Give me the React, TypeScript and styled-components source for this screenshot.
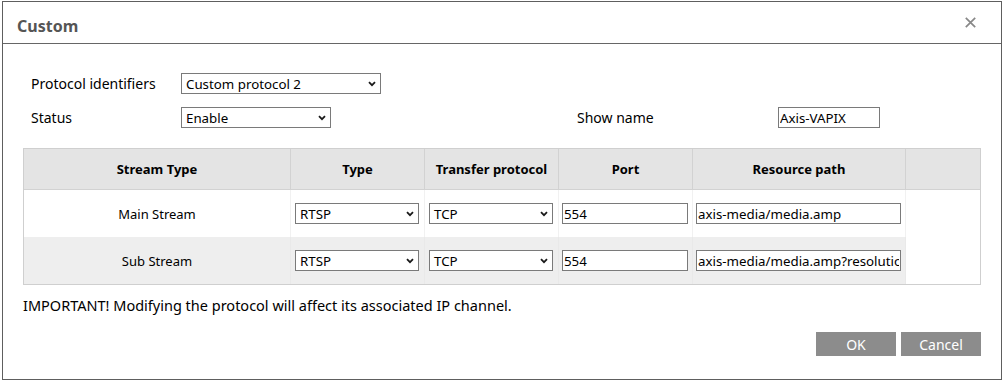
import React from "react";
import styled, { createGlobalStyle } from "styled-components";

const Global = createGlobalStyle`
  html, body { margin: 0; padding: 0; background: #fff; }
  body { font-family: "Noto Sans", "Open Sans", sans-serif; color: #000; }
  * { box-sizing: border-box; }
`;

const Page = styled.div`
  width: 1003px;
  height: 383px;
  padding: 1px 0 0 2px;
  background: #fff;
`;

const Dialog = styled.div`
  width: 1000px;
  height: 379px;
  border: 1px solid #5e5e5e;
  display: flex;
  flex-direction: column;
  background: #fff;
`;

const Header = styled.div`
  height: 42px;
  flex: none;
  border-bottom: 1px solid #666;
  display: flex;
  align-items: center;
  justify-content: space-between;
  padding: 0 25px 0 14px;
`;

const Title = styled.div`
  font-size: 16px;
  font-weight: 700;
  color: #555;
  padding-top: 6px;
`;

const Close = styled.button`
  border: none;
  background: none;
  padding: 0;
  width: 11px;
  height: 11px;
  display: flex;
  cursor: pointer;
`;

const Body = styled.div`
  padding: 29px 20px 0 20px;
  display: flex;
  flex-direction: column;
`;

const FormGrid = styled.div`
  margin-left: 8px;
  display: grid;
  grid-template-columns: 150px 396px 201px auto;
  grid-auto-rows: 21px;
  row-gap: 13px;
  align-items: center;
  font-size: 14px;
`;

const Label = styled.div`
  line-height: 21px;
  white-space: nowrap;
`;

const SelectBox = styled.div<{ $w: number }>`
  width: ${(p) => p.$w}px;
  height: 21px;
  border: 1px solid #7a7a7a;
  background: #fff;
  display: flex;
  align-items: center;
  justify-content: space-between;
  padding: 0 4px 0 4px;
  font-size: 13.3px;
  white-space: nowrap;
  justify-self: start;
`;

const TextInput = styled.input<{ $w: number }>`
  width: ${(p) => p.$w}px;
  height: 21px;
  border: 1px solid #7a7a7a;
  border-radius: 0;
  padding: 0 1px;
  margin: 0;
  font-family: "Noto Sans", "Open Sans", sans-serif;
  font-size: 13.3px;
  color: #000;
  background: #fff;
  outline: none;
  justify-self: start;
`;

const Table = styled.div`
  margin-top: 20px;
  width: 958px;
  border: 1px solid #cfcfcf;
`;

const COLS = "267px 134px 134px 134px 213px 1fr";

const HeadRow = styled.div`
  display: grid;
  grid-template-columns: ${COLS};
  height: 41px;
  background: #e4e4e4;
  border-bottom: 1px solid #d2d2d2;
`;

const HeadCell = styled.div`
  display: flex;
  align-items: center;
  justify-content: center;
  font-size: 13px;
  font-weight: 700;
  border-right: 1px solid #d2d2d2;
  &:last-child { border-right: none; }
`;

const Row = styled.div`
  display: grid;
  grid-template-columns: ${COLS};
  height: 47px;
`;

const Cell = styled.div<{ $alt?: boolean; $center?: boolean; $pad?: number }>`
  display: flex;
  align-items: center;
  justify-content: ${(p) => (p.$center ? "center" : "flex-start")};
  padding-left: ${(p) => p.$pad ?? 0}px;
  background: ${(p) => (p.$alt ? "#eeeeee" : "#ffffff")};
  border-right: 1px solid ${(p) => (p.$alt ? "#e9e9e9" : "#f1f1f1")};
  font-size: 13px;
`;

const Note = styled.div`
  margin-top: 10px;
  font-size: 14.5px;
  line-height: 20px;
`;

const Footer = styled.div`
  margin-top: 17px;
  display: flex;
  justify-content: flex-end;
  gap: 5px;
`;

const Btn = styled.button`
  width: 80px;
  height: 24px;
  border: none;
  background: #8c8c8c;
  color: #fff;
  font-family: "Noto Sans", "Open Sans", sans-serif;
  font-size: 14px;
  padding: 0;
  cursor: pointer;
`;

const Chevron = () => (
  <svg width="8" height="6" viewBox="0 0 8 6" style={{ flex: "none" }}>
    <path d="M1 1.2 L4 4.2 L7 1.2" fill="none" stroke="#1a1a1a" strokeWidth="1.8" />
  </svg>
);

const Select = ({ value, w }: { value: string; w: number }) => (
  <SelectBox $w={w}>
    <span>{value}</span>
    <Chevron />
  </SelectBox>
);

const rows = [
  { name: "Main Stream", path: "axis-media/media.amp" },
  { name: "Sub Stream", path: "axis-media/media.amp?resolution=640x480" },
];

export default function App() {
  return (
    <Page>
      <Global />
      <Dialog>
        <Header>
          <Title>Custom</Title>
          <Close aria-label="close">
            <svg width="11" height="11" viewBox="0 0 11 11">
              <path d="M0.8 0.8 L10.2 10.2 M10.2 0.8 L0.8 10.2" stroke="#888" strokeWidth="1.7" />
            </svg>
          </Close>
        </Header>
        <Body>
          <FormGrid>
            <Label>Protocol identifiers</Label>
            <Select value="Custom protocol 2" w={200} />
            <span />
            <span />
            <Label>Status</Label>
            <Select value="Enable" w={150} />
            <Label>Show name</Label>
            <TextInput $w={102} defaultValue="Axis-VAPIX" />
          </FormGrid>
          <Table>
            <HeadRow>
              <HeadCell>Stream Type</HeadCell>
              <HeadCell>Type</HeadCell>
              <HeadCell>Transfer protocol</HeadCell>
              <HeadCell>Port</HeadCell>
              <HeadCell>Resource path</HeadCell>
              <HeadCell />
            </HeadRow>
            {rows.map((r, i) => (
              <Row key={r.name}>
                <Cell $alt={i === 1} $center>{r.name}</Cell>
                <Cell $alt={i === 1} $pad={4}><Select value="RTSP" w={124} /></Cell>
                <Cell $alt={i === 1} $pad={4}><Select value="TCP" w={124} /></Cell>
                <Cell $alt={i === 1} $pad={3}><TextInput $w={126} defaultValue="554" /></Cell>
                <Cell $alt={i === 1} $pad={3}><TextInput $w={205} defaultValue={r.path} /></Cell>
              </Row>
            ))}
          </Table>
          <Note>IMPORTANT! Modifying the protocol will affect its associated IP channel.</Note>
          <Footer>
            <Btn>OK</Btn>
            <Btn>Cancel</Btn>
          </Footer>
        </Body>
      </Dialog>
    </Page>
  );
}
